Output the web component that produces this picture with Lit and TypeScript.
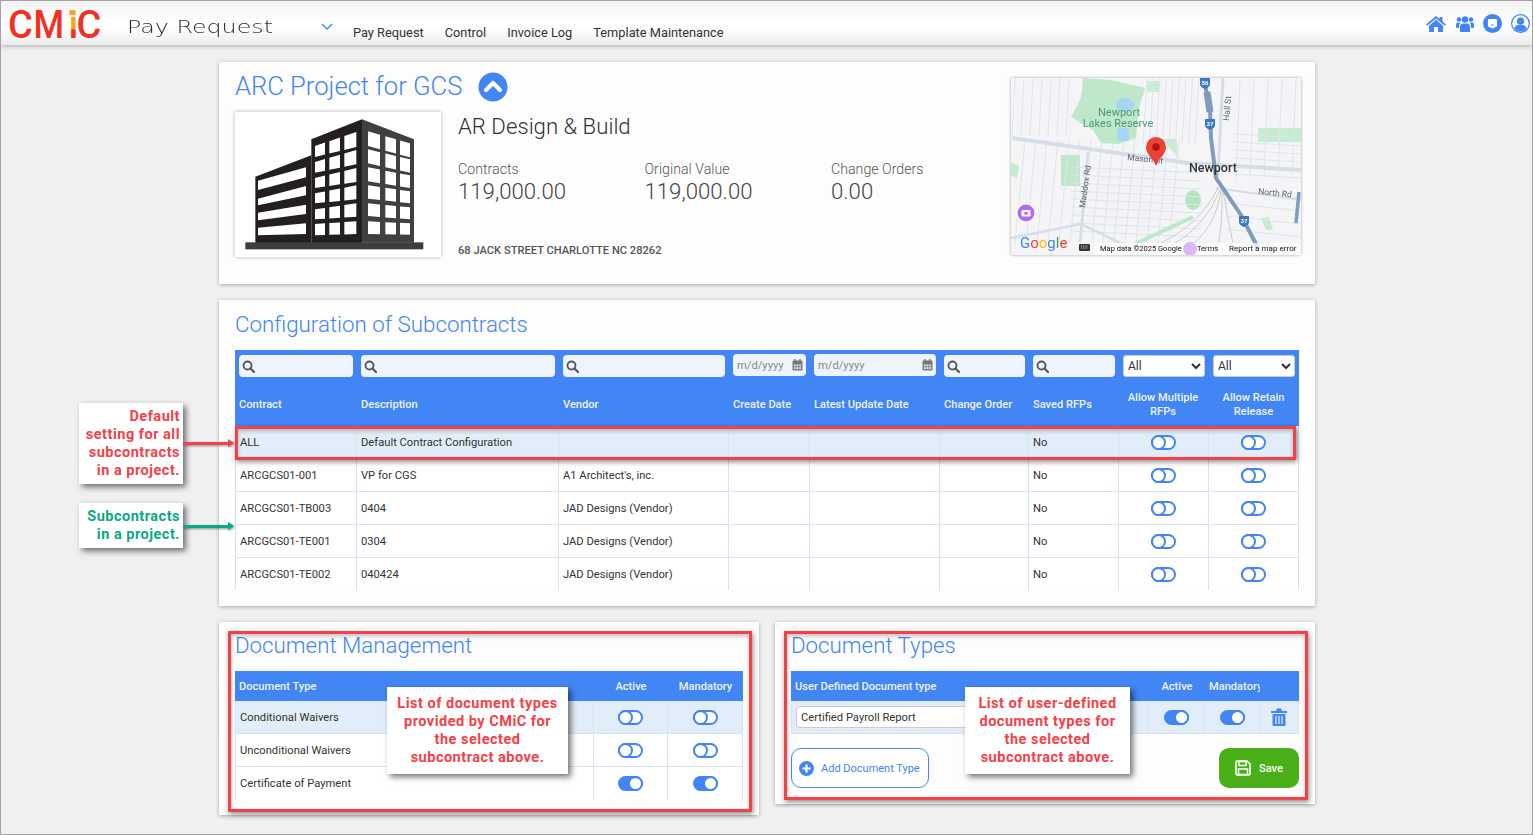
import { css, html, svg, LitElement } from "lit";
import { customElement } from "lit/decorators.js";
import { classMap } from "lit/directives/class-map.js";

const contracts = [
  ["ALL", "Default Contract Configuration", ""],
  ["ARCGCS01-001", "VP for CGS", "A1 Architect's, inc."],
  ["ARCGCS01-TB003", "0404", "JAD Designs (Vendor)"],
  ["ARCGCS01-TE001", "0304", "JAD Designs (Vendor)"],
  ["ARCGCS01-TE002", "040424", "JAD Designs (Vendor)"],
];

const docTypes = [
  { name: "Conditional Waivers", on: false },
  { name: "Unconditional Waivers", on: false },
  { name: "Certificate of Payment", on: true },
];

const toggle = (on: boolean) =>
  html`<span class=${classMap({ toggle: true, on })}></span>`;

const searchBox = () => html`<div class="filter">
  <svg width="13" height="13" viewBox="0 0 13 13">
    <circle cx="5.5" cy="5.5" r="4" fill="none" stroke="#555" stroke-width="1.8" />
    <path d="M8.5 8.5l3.5 3.5" stroke="#555" stroke-width="2.2" stroke-linecap="round" />
  </svg>
</div>`;

const dateBox = () => html`<div class="filter date">
  <input placeholder="m/d/yyyy" />
  <svg width="11" height="12" viewBox="0 0 11 12">
    <rect x=".5" y="1.5" width="10" height="10" rx="1" fill="#777" />
    <path d="M3 0v3M8 0v3" stroke="#777" stroke-width="1.4" />
    <path d="M1.5 5h8v5.5h-8zM4 5v5.5M6.8 5v5.5M1.5 7.6h8" fill="#ddd" stroke="#777" stroke-width=".7" />
  </svg>
</div>`;

const selectBox = () => html`<div class="filter-sel">
  <select><option>All</option><option>Yes</option><option>No</option></select>
</div>`;

// windows of one face of the building, row edges are [top at x0, bottom at x0, top at x1, bottom at x1]
function windows(x0: number, x1: number, cols: number[][], rows: number[][]) {
  const at = (a: number, b: number, x: number) => a + ((x - x0) / (x1 - x0)) * (b - a);
  return rows.flatMap((r) =>
    cols.map(
      ([l, e]) =>
        svg`<polygon fill="#fff" points="${l},${at(r[0], r[2], l)} ${e},${at(r[0], r[2], e)} ${e},${at(r[1], r[3], e)} ${l},${at(r[1], r[3], l)}" />`
    )
  );
}

const building = () => html`<svg width="206" height="145" viewBox="9 8 618 435">
  <rect x="40" y="399" width="534" height="21" fill="#3d3d3f" />
  <polygon points="390,30 546,90 546,400 390,400" fill="#404042" />
  <polygon points="238,90 390,30 390,400 238,400" fill="#231f20" />
  <polygon points="70,202 238,138 238,400 70,400" fill="#231f20" />
  ${windows(249, 373, [[249, 279], [292, 324], [337, 373]], [
    [110, 143, 68, 113],
    [158, 190, 122, 165],
    [206, 236, 176, 218],
    [252, 282, 228, 270],
    [300, 330, 282, 322],
    [344, 378, 336, 374],
  ])}
  ${windows(408, 534, [[408, 444], [460, 492], [504, 534]], [
    [66, 110, 102, 144],
    [120, 162, 150, 190],
    [174, 216, 198, 236],
    [228, 268, 246, 282],
    [282, 320, 294, 330],
    [336, 374, 342, 376],
  ])}
  ${windows(78, 222, [[78, 222]], [
    [214, 242, 174, 204],
    [268, 288, 230, 258],
    [310, 333, 286, 314],
    [355, 378, 342, 374],
  ])}
</svg>`;

function streets() {
  const out = [];
  for (let i = 0; i < 15; i++) {
    const x = 8 + i * 11;
    out.push(svg`<path d="M${x + 6} 62L${x - 4} 165" />`);
  }
  for (let i = 0; i < 9; i++) {
    const y = 92 + i * 8;
    out.push(svg`<path d="M60 ${y - 3}L190 ${y + 3}" />`);
  }
  for (let i = 0; i < 9; i++) {
    const x = 136 + i * 6.5;
    out.push(svg`<path d="M${x} 0L${x - 4} 66" />`);
  }
  for (let i = 0; i < 6; i++) {
    const y = 56 + i * 8;
    out.push(svg`<path d="M222 ${y}L290 ${y + 4}" />`);
  }
  for (let i = 0; i < 5; i++) {
    const x = 225 + i * 14;
    out.push(svg`<path d="M${x + 4} 0L${x} 100" />`);
  }
  for (let i = 0; i < 7; i++) {
    const x = 4 + i * 9;
    out.push(svg`<path d="M${x} 0L${x - 3} 58" />`);
  }
  for (let i = 0; i < 4; i++) {
    const y = 112 + i * 13;
    out.push(svg`<path d="M215 ${y}L290 ${y + 8}" />`);
  }
  return out;
}

const shield = (x: number, y: number, n: string) => svg`
  <path d="M${x - 5} ${y - 5}h10v6q0 3-5 5q-5-2-5-5z" fill="#3b78c6" />
  <text x=${x} y=${y + 2} class="shield">${n}</text>`;

const mapView = () => html`<svg class="map" width="290" height="177" viewBox="0 0 290 177">
  <rect width="290" height="177" fill="#f5f5f7" />
  <rect x="136" y="3" width="12" height="11" fill="#c9ecd4" />
  <rect x="50" y="77" width="19" height="31" fill="#bfe8cb" />
  <rect x="247" y="50" width="43" height="14" fill="#c4ecd0" />
  <polygon points="150,61 165,61 168,80" fill="#c9ecd4" />
  <ellipse cx="182" cy="122" rx="8" ry="10" fill="#b4e5c3" />
  <polygon points="0,84 8,88 6,100 0,98" fill="#c4ecd0" />
  <polygon points="250,140 258,139 262,152 255,152" fill="#c4ecd0" />
  <g stroke="#dfe5ec" stroke-width="1" fill="none">${streets()}</g>
  <polygon points="72,0 100,2 134,10 128,30 125,60 108,66 90,65 82,52 60,39 70,20" fill="#bfe8cb" />
  <ellipse cx="114" cy="27" rx="9" ry="7" fill="#a6d5f5" />
  <rect x="106" y="50" width="12" height="13" rx="3" fill="#a6d5f5" />
  <g stroke="#d5dde6" fill="none">
    <path d="M1 60L177 85L290 92" stroke-width="4" />
    <path d="M212 0L207 97" stroke-width="3" />
    <path d="M77 74L69 164" stroke-width="2.5" />
    <path d="M0 160L70 146L120 170" stroke-width="2.5" />
    <path d="M205 110L290 122" stroke-width="2" />
  </g>
  <path d="M182 139L124 166" stroke="#bfe8cb" stroke-width="4" />
  <g stroke="#c9ccd2" fill="none" stroke-width="1">
    <path d="M207 110Q190 145 150 165" />
    <path d="M209 112Q195 148 160 168" />
    <path d="M210 112Q205 150 175 172" />
    <path d="M211 112Q212 150 205 177" />
    <path d="M212 112Q218 150 225 177" />
  </g>
  <g stroke="#7f9bbd" fill="none">
    <path d="M194 7L199 30L200 60L205 100L230 137L247 170" stroke-width="4" />
    <path d="M196 14L199 34" stroke-width="7" />
    <path d="M288 114L285 145" stroke-width="3.5" />
  </g>
  ${shield(194, 5, "56")}${shield(199, 46, "37")}${shield(233, 143, "37")}
  <text x="108" y="38" class="park">Newport</text>
  <text x="107" y="49" class="park">Lakes Reserve</text>
  <text transform="translate(116 82) rotate(6)" class="road">Mason St</text>
  <text transform="translate(74 130) rotate(-82)" class="road">Maddox Rd</text>
  <text transform="translate(218 43) rotate(-85)" class="road">Hall St</text>
  <text transform="translate(247 116) rotate(6)" class="road">North Rd</text>
  <text x="178" y="94" class="town">Newport</text>
  <path d="M145 88C142 79 135 77 135 69a10 10 0 0 1 20 0C155 77 148 79 145 88z" fill="#ea4335" />
  <circle cx="145" cy="69" r="3.8" fill="#b31412" />
  <circle cx="15" cy="135" r="10" fill="#fff" />
  <circle cx="15" cy="135" r="8.5" fill="#b36bf0" />
  <rect x="10.5" y="132" width="9" height="6.5" rx="1.2" fill="#fff" />
  <circle cx="15" cy="135.3" r="1.7" fill="#b36bf0" />
  <rect x="84" y="165" width="206" height="12" fill="#fff" fill-opacity=".72" />
  <circle cx="179" cy="171" r="7" fill="#d9b8f7" />
  <text x="9" y="170" class="google"><tspan fill="#4285f4">G</tspan><tspan fill="#ea4335">o</tspan><tspan fill="#fbbc05">o</tspan><tspan fill="#4285f4">g</tspan><tspan fill="#34a853">l</tspan><tspan fill="#ea4335">e</tspan></text>
  <rect x="68" y="166" width="11" height="7" rx="1" fill="#333" />
  <path d="M70 168h7M70 170h7" stroke="#fff" stroke-width=".8" stroke-dasharray="1 .8" />
  <text x="89" y="173" class="attr">Map data ©2025 Google</text>
  <text x="186" y="173" class="attr">Terms</text>
  <text x="218" y="173" class="attr wide">Report a map error</text>
</svg>`;

@customElement("app-root")
export class AppRoot extends LitElement {
  render() {
    return html`
      <header class="topbar">
        <svg class="logo" width="102" height="46" viewBox="-2 0 102 46">
          <defs>
            <linearGradient id="ig" gradientUnits="userSpaceOnUse" x1="0" y1="0" x2="0" y2="44">
              <stop offset=".63" stop-color="#f5a623" />
              <stop offset=".66" stop-color="#ee3124" />
            </linearGradient>
          </defs>
          <text x="-1" y="37" class="logo-text" fill="#ee3124">C</text>
          <text transform="translate(24.5 37) scale(.92 1)" class="logo-text" fill="#ee3124">M</text>
          <text x="59.5" y="37" class="logo-text" fill="url(#ig)">ı</text>
          <text x="67.5" y="37" class="logo-text" fill="#ee3124">C</text>
          <rect x="60.5" y="9" width="6" height="5" fill="#f5a623" />
        </svg>
        <div class="app-name">Pay Request</div>
        <svg class="app-caret" width="12" height="8" viewBox="0 0 12 8">
          <path d="M1 1l5 5 5-5" fill="none" stroke="#4285f4" stroke-width="1.4" />
        </svg>
        <nav class="nav">
          <span>Pay Request</span><span>Control</span><span>Invoice Log</span><span>Template Maintenance</span>
        </nav>
        <div class="top-icons">
          <svg width="20" height="17" viewBox="0 0 20 17">
            <path d="M10 1L0 9.5l1.2 1.3L10 3.4l8.8 7.4L20 9.5 16.5 6.5V2h-3v2z" fill="#4285f4" />
            <path d="M10 4.8L3 10.7V17h5v-5h4v5h5v-6.3z" fill="#4285f4" />
          </svg>
          <svg width="18" height="17" viewBox="0 0 18 17">
            <g fill="#4285f4">
              <circle cx="9" cy="4.5" r="3.2" />
              <circle cx="3" cy="4.5" r="2.3" />
              <circle cx="15" cy="4.5" r="2.3" />
              <path d="M4 17v-5q0-3.5 3-3.5h4q3 0 3 3.5v5z" />
              <path d="M0 12V9.5Q0 7.5 2 7.5h2.5Q3 9 3 11.5V13H.8z" />
              <path d="M18 12V9.5q0-2-2-2h-2.5Q15 9 15 11.5V13h2.2z" />
            </g>
          </svg>
          <svg width="19" height="19" viewBox="0 0 19 19">
            <circle cx="9.5" cy="9.5" r="9.5" fill="#4285f4" />
            <rect x="5" y="5" width="9" height="8" rx="1" fill="#fff" />
            <rect x="7.5" y="13" width="4" height="1.2" fill="#fff" />
            <rect x="8" y="10.5" width="3" height=".8" fill="#4285f4" />
          </svg>
          <svg width="19" height="19" viewBox="0 0 19 19">
            <circle cx="9.5" cy="9.5" r="9.5" fill="#4285f4" />
            <circle cx="9.5" cy="9.5" r="8.2" fill="#fff" />
            <circle cx="9.5" cy="7.2" r="3.6" fill="#4285f4" />
            <path d="M3.3 14.6Q4 11 7.5 11h4q3.5 0 4.2 3.6A8 8 0 0 1 3.3 14.6z" fill="#4285f4" />
          </svg>
        </div>
      </header>

      <main class="page">
        <section class="card project">
          <div class="project-left">
            <div class="project-title">
              <h1>ARC Project for GCS</h1>
              <svg width="30" height="30" viewBox="0 0 30 30">
                <circle cx="15" cy="15" r="14.5" fill="#4285f4" />
                <path d="M8 18l7-7 7 7" fill="none" stroke="#fff" stroke-width="4.2" stroke-linejoin="round" stroke-linecap="round" />
              </svg>
            </div>
            <div class="project-body">
              <div class="photo">${building()}</div>
              <div class="info">
                <div class="company">AR Design &amp; Build</div>
                <div class="stats">
                  <div><label>Contracts</label><b>119,000.00</b></div>
                  <div><label>Original Value</label><b>119,000.00</b></div>
                  <div><label>Change Orders</label><b>0.00</b></div>
                </div>
                <div class="address">68 JACK STREET CHARLOTTE NC 28262</div>
              </div>
            </div>
          </div>
          ${mapView()}
        </section>

        <section class="card config">
          <h2>Configuration of Subcontracts</h2>
          <div class="table">
            <div class="cfg-grid filters">
              ${searchBox()}${searchBox()}${searchBox()}${dateBox()}${dateBox()}${searchBox()}${searchBox()}${selectBox()}${selectBox()}
            </div>
            <div class="cfg-grid heads">
              <span>Contract</span><span>Description</span><span>Vendor</span><span>Create Date</span>
              <span>Latest Update Date</span><span>Change Order</span><span>Saved RFPs</span>
              <span class="mid">Allow Multiple RFPs</span><span class="mid">Allow Retain Release</span>
            </div>
            ${contracts.map(
              (c, i) => html`<div class=${classMap({ "cfg-grid": true, row: true, picked: i === 0 })}>
                <div class="cell">${c[0]}</div>
                <div class="cell">${c[1]}</div>
                <div class="cell">${c[2]}</div>
                <div class="cell"></div>
                <div class="cell"></div>
                <div class="cell"></div>
                <div class="cell">No</div>
                <div class="cell mid">${toggle(false)}</div>
                <div class="cell mid">${toggle(false)}</div>
              </div>`
            )}
          </div>
        </section>

        <div class="lower">
          <section class="card docs">
            <h2>Document Management</h2>
            <div class="doc-grid heads short">
              <span>Document Type</span><span class="mid">Active</span><span class="mid">Mandatory</span>
            </div>
            ${docTypes.map(
              (d, i) => html`<div class=${classMap({ "doc-grid": true, row: true, picked: i === 0 })}>
                <div class="cell">${d.name}</div>
                <div class="cell mid">${toggle(d.on)}</div>
                <div class="cell mid">${toggle(d.on)}</div>
              </div>`
            )}
          </section>

          <section class="card docs">
            <h2>Document Types</h2>
            <div class="user-grid heads short">
              <span>User Defined Document type</span><span class="mid">Active</span>
              <span class="clip">Mandatory</span><span></span>
            </div>
            <div class="user-grid row picked">
              <div class="cell"><input class="doc-input" value="Certified Payroll Report" /></div>
              <div class="cell mid">${toggle(true)}</div>
              <div class="cell mid">${toggle(true)}</div>
              <div class="cell mid">
                <svg width="16" height="18" viewBox="0 0 16 18">
                  <path d="M0 3h16v2H0zM5 3l1-2.5h4L11 3z" fill="#4285f4" />
                  <path d="M1.5 6h13v10.5q0 1.5-1.5 1.5H3q-1.5 0-1.5-1.5z" fill="#4285f4" />
                  <path d="M5 8v8M8 8v8M11 8v8" stroke="#e1eef9" stroke-width="1.2" />
                </svg>
              </div>
            </div>
            <div class="actions">
              <button class="add">
                <svg width="15" height="15" viewBox="0 0 15 15">
                  <circle cx="7.5" cy="7.5" r="7.5" fill="#4285f4" />
                  <path d="M7.5 3.5v8M3.5 7.5h8" stroke="#fff" stroke-width="2.2" />
                </svg>
                Add Document Type
              </button>
              <button class="save">
                <svg width="16" height="16" viewBox="0 0 16 16">
                  <path d="M1 2q0-1 1-1h10l3 3v10q0 1-1 1H2q-1 0-1-1z" fill="none" stroke="#fff" stroke-width="1.6" />
                  <path d="M4 1.5h7v4H4zM3.5 9h9v5.5h-9z" fill="none" stroke="#fff" stroke-width="1.5" />
                </svg>
                Save
              </button>
            </div>
          </section>
        </div>
      </main>

      <div class="frame f-row"></div>
      <div class="frame f-docs"></div>
      <div class="frame f-types"></div>

      <div class="note red right n-default">
        Default<br />setting for all<br />subcontracts<br />in a project.
      </div>
      <div class="note green right n-subs">
        Subcontracts<br />in a project.
      </div>
      <div class="arrow red-line"></div>
      <div class="arrow green-line"></div>
      <div class="note red n-docs">
        List of document types<br />provided by CMiC for<br />the selected<br />subcontract above.
      </div>
      <div class="note red n-types">
        List of user-defined<br />document types for<br />the selected<br />subcontract above.
      </div>
    `;
  }

  static styles = css`
    :host {
      display: block;
      position: relative;
      box-sizing: border-box;
      width: 1533px;
      height: 835px;
      overflow: hidden;
      border: 1px solid #a3a3a3;
      background: #f0f0f0;
      font-family: Roboto, "Liberation Sans", sans-serif;
      color: #333;
    }

    .topbar {
      display: flex;
      height: 44px;
      box-sizing: border-box;
      padding-left: 8px;
      align-items: flex-start;
      background: linear-gradient(#f3f3f3, #fff 45%, #fff 60%, #ececec);
      box-shadow: 0 1px 5px rgba(0, 0, 0, 0.3);
    }
    .logo {
      margin-left: -2px;
      flex: none;
    }
    .logo-text {
      font: 500 38px Roboto, sans-serif;
    }
    .app-name {
      width: 194px;
      margin-left: 18px;
      margin-top: 14px;
      flex: none;
      font: 200 18px/24px "DejaVu Sans", sans-serif;
      color: #1f2933;
      transform: scaleX(1.32);
      transform-origin: left center;
      white-space: nowrap;
    }
    .app-caret {
      margin-top: 22px;
      flex: none;
    }
    .nav {
      display: flex;
      gap: 21px;
      margin-left: 20px;
      margin-top: 24px;
      font-size: 12.8px;
      line-height: 16px;
      color: #333;
    }
    .top-icons {
      display: flex;
      gap: 9px;
      align-items: center;
      margin-left: auto;
      margin-right: 2px;
      margin-top: 13px;
    }
    .top-icons svg:first-child {
      margin-right: 1px;
    }

    .page {
      padding: 17px 0 0 218px;
      width: 1096px;
    }
    .card {
      box-sizing: border-box;
      background: #fdfdfd;
      box-shadow: 0 1px 4px rgba(0, 0, 0, 0.3);
      padding: 0 16px;
    }
    h1,
    h2 {
      margin: 0;
      font-weight: 300;
      color: #4285f4;
    }
    h1 {
      font-size: 25.6px;
      line-height: 30px;
      margin-bottom: 2px;
    }
    h2 {
      font-size: 22.3px;
      line-height: 49px;
      height: 50px;
    }

    .project {
      display: flex;
      justify-content: space-between;
      height: 222px;
      padding-right: 14px;
    }
    .project-left {
      width: 776px;
      flex: none;
    }
    .project-title {
      display: flex;
      align-items: center;
      gap: 16px;
      height: 34px;
      margin: 8px 0;
    }
    .project-body {
      display: flex;
    }
    .photo {
      width: 206px;
      height: 145px;
      background: #fff;
      box-shadow: 0 0 4px rgba(0, 0, 0, 0.3);
    }
    .photo svg {
      display: block;
    }
    .info {
      display: flex;
      flex-direction: column;
      margin-left: 17px;
      height: 145px;
    }
    .company {
      font-size: 22.2px;
      font-weight: 300;
      line-height: 28px;
      color: #333;
    }
    .stats {
      display: grid;
      grid-template-columns: 186.5px 186.5px 180px;
      margin-top: 19px;
    }
    .stats label {
      display: block;
      font-size: 14.2px;
      font-weight: 300;
      line-height: 20px;
      color: #555;
    }
    .stats b {
      display: block;
      font-size: 22.2px;
      font-weight: 300;
      line-height: 24px;
      color: #444;
    }
    .address {
      margin-top: auto;
      font-size: 11.15px;
      font-weight: 500;
      line-height: 12px;
      color: #555;
    }
    .map {
      display: block;
      flex: none;
      margin-top: 16px;
      box-shadow: 0 0 3px rgba(0, 0, 0, 0.35);
      filter: blur(0.3px);
    }
    .map text {
      font-family: Roboto, sans-serif;
    }
    .park {
      font-size: 11px;
      fill: #4a9b78;
      text-anchor: middle;
    }
    .road {
      font-size: 8.5px;
      fill: #5a6470;
    }
    .town {
      font-size: 12.5px;
      font-weight: 500;
      fill: #333;
    }
    .shield {
      font-size: 6px;
      font-weight: 700;
      fill: #fff;
      text-anchor: middle;
    }
    .google {
      font-size: 15px;
    }
    .attr {
      font-size: 7.5px;
      fill: #111;
    }
    .attr.wide {
      font-size: 8.1px;
    }

    .config {
      height: 306px;
      margin-top: 16px;
    }
    .cfg-grid {
      display: grid;
      grid-template-columns: 121px 202px 170px 81px 130px 89px 90px 90px 91px;
    }
    .cfg-grid.row {
      grid-template-columns: 122px 202px 170px 81px 130px 89px 90px 90px 90px;
    }
    .filters {
      height: 32px;
      padding-top: 5px;
      box-sizing: border-box;
      background: #4285f4;
    }
    .filter,
    .filter-sel {
      margin: 0 3px 0 5px;
      height: 22px;
    }
    .filters > :first-child {
      margin-left: 4px;
    }
    .filters > :last-child {
      margin-right: 4px;
    }
    .filter {
      display: flex;
      align-items: center;
      padding-left: 3px;
      box-sizing: border-box;
      background: #eef4fe;
      border-radius: 4px;
    }
    .date {
      margin-top: -1px;
      padding: 0 3px 0 4px;
      justify-content: space-between;
    }
    .date input {
      width: 50px;
      min-width: 0;
      padding: 0;
      border: 0;
      outline: 0;
      background: transparent;
      font: 11.2px Roboto, sans-serif;
    }
    .date input::placeholder {
      color: #888;
    }
    .filter-sel select {
      display: block;
      width: 100%;
      height: 22px;
      padding: 0;
      box-sizing: border-box;
      border: 1px solid #ccc;
      border-radius: 3px;
      background: #fff;
      font: 12px Roboto, sans-serif;
      color: #333;
    }
    .heads {
      height: 44px;
      padding-top: 1px;
      box-sizing: border-box;
      align-items: center;
      background: #4285f4;
      color: #eef4fe;
      font-size: 11.1px;
      font-weight: 500;
      line-height: 14px;
    }
    .heads.short {
      height: 30px;
    }
    .heads > span {
      padding-left: 4px;
    }
    .cfg-grid.heads > span:not(:first-child) {
      padding-left: 5px;
    }
    .heads > span.mid,
    .cfg-grid.heads > span.mid {
      padding: 0 5px;
      text-align: center;
    }
    .clip {
      overflow: hidden;
      white-space: nowrap;
    }
    .row {
      height: 33px;
      box-sizing: border-box;
      border-bottom: 1px solid #d5e3f5;
      font-size: 11.2px;
      color: #333;
      background: #fff;
    }
    .row:last-child {
      height: 32px;
      border-bottom: 0;
    }
    .row.picked {
      background: #e1eef9;
    }
    .cell {
      display: flex;
      align-items: center;
      padding-left: 4px;
      border-right: 1px solid #d5e3f5;
      overflow: hidden;
    }
    .cell:first-child {
      border-left: 1px solid #d5e3f5;
    }
    .cell.mid {
      justify-content: center;
      padding: 0;
    }
    .toggle {
      display: block;
      position: relative;
      box-sizing: border-box;
      width: 25px;
      height: 15px;
      border: 2px solid #4285f4;
      border-radius: 8px;
      background: #fff;
    }
    .toggle::after {
      content: "";
      position: absolute;
      top: -2px;
      left: -2px;
      box-sizing: border-box;
      width: 15px;
      height: 15px;
      border: 2px solid #4285f4;
      border-radius: 50%;
      background: #fff;
    }
    .toggle.on {
      background: #4285f4;
    }
    .toggle.on::after {
      left: auto;
      right: -2px;
    }

    .lower {
      display: flex;
      align-items: flex-start;
      gap: 16px;
      margin-top: 16px;
    }
    .docs {
      width: 540px;
      padding-bottom: 15px;
    }
    .docs h2 {
      line-height: 46px;
      height: 49px;
    }
    .doc-grid {
      display: grid;
      grid-template-columns: 359px 74px 75px;
    }
    .user-grid {
      display: grid;
      grid-template-columns: 358px 56px 55px 39px;
    }
    .docs .row:last-child {
      height: 33px;
    }
    .docs .heads > .clip {
      padding-left: 4px;
    }
    .user-grid.row {
      height: 33px;
      border-bottom: 1px solid #d5e3f5;
    }
    .doc-input {
      width: 300px;
      height: 22px;
      box-sizing: border-box;
      padding: 0 4px;
      border: 1px solid #ccc;
      border-radius: 4px;
      outline: 0;
      background: #fff;
      font: 11.2px Roboto, sans-serif;
      color: #333;
    }
    .actions {
      display: flex;
      justify-content: space-between;
      margin-top: 14px;
      margin-bottom: 1px;
    }
    .actions button {
      display: flex;
      align-items: center;
      height: 40px;
      box-sizing: border-box;
      border-radius: 10px;
      font: 500 11px Roboto, sans-serif;
      cursor: pointer;
    }
    .actions .add {
      width: 138px;
      gap: 7px;
      padding: 0 0 0 7px;
      border: 1px solid #4285f4;
      background: #fff;
      color: #4285f4;
      font-weight: 400;
    }
    .actions .save {
      width: 80px;
      gap: 8px;
      padding: 0 0 0 16px;
      border: 0;
      background: #4baf1a;
      color: #fff;
    }

    .frame {
      position: absolute;
      box-sizing: border-box;
      border: 3px solid #f44147;
      box-shadow: 1px 2px 5px rgba(0, 0, 0, 0.45), inset 0 2px 4px rgba(0, 0, 0, 0.25);
      pointer-events: none;
    }
    .f-row {
      left: 234px;
      top: 425px;
      width: 1061px;
      height: 34px;
    }
    .f-docs {
      left: 227px;
      top: 630px;
      width: 524px;
      height: 181px;
    }
    .f-types {
      left: 783px;
      top: 630px;
      width: 524px;
      height: 169px;
    }
    .note {
      position: absolute;
      box-sizing: border-box;
      display: flex;
      align-items: center;
      justify-content: center;
      padding: 0 3px;
      background: #fff;
      box-shadow: 3px 3px 6px rgba(0, 0, 0, 0.55);
      font: 700 14.5px/18px Roboto, sans-serif;
      letter-spacing: 0.5px;
      text-align: center;
    }
    .note.right {
      justify-content: flex-end;
      text-align: right;
    }
    .note.red {
      color: #f44147;
    }
    .note.green {
      color: #0aa884;
    }
    .n-default {
      left: 78px;
      top: 402px;
      width: 104px;
      height: 81px;
    }
    .n-subs {
      left: 78px;
      top: 502px;
      width: 104px;
      height: 45px;
    }
    .n-docs {
      left: 386px;
      top: 686px;
      width: 181px;
      height: 87px;
    }
    .n-types {
      left: 964px;
      top: 686px;
      width: 165px;
      height: 87px;
    }
    .arrow {
      position: absolute;
      left: 182px;
      width: 45px;
      height: 3px;
      filter: drop-shadow(1px 1px 1px rgba(0, 0, 0, 0.4));
    }
    .arrow::after {
      content: "";
      position: absolute;
      left: 45px;
      top: -3px;
      border-left: 6px solid currentColor;
      border-top: 4.5px solid transparent;
      border-bottom: 4.5px solid transparent;
    }
    .red-line {
      top: 441px;
      background: #f44147;
      color: #f44147;
    }
    .green-line {
      top: 524px;
      background: #0aa884;
      color: #0aa884;
    }
  `;
}

declare global {
  interface HTMLElementTagNameMap {
    "app-root": AppRoot;
  }
}
